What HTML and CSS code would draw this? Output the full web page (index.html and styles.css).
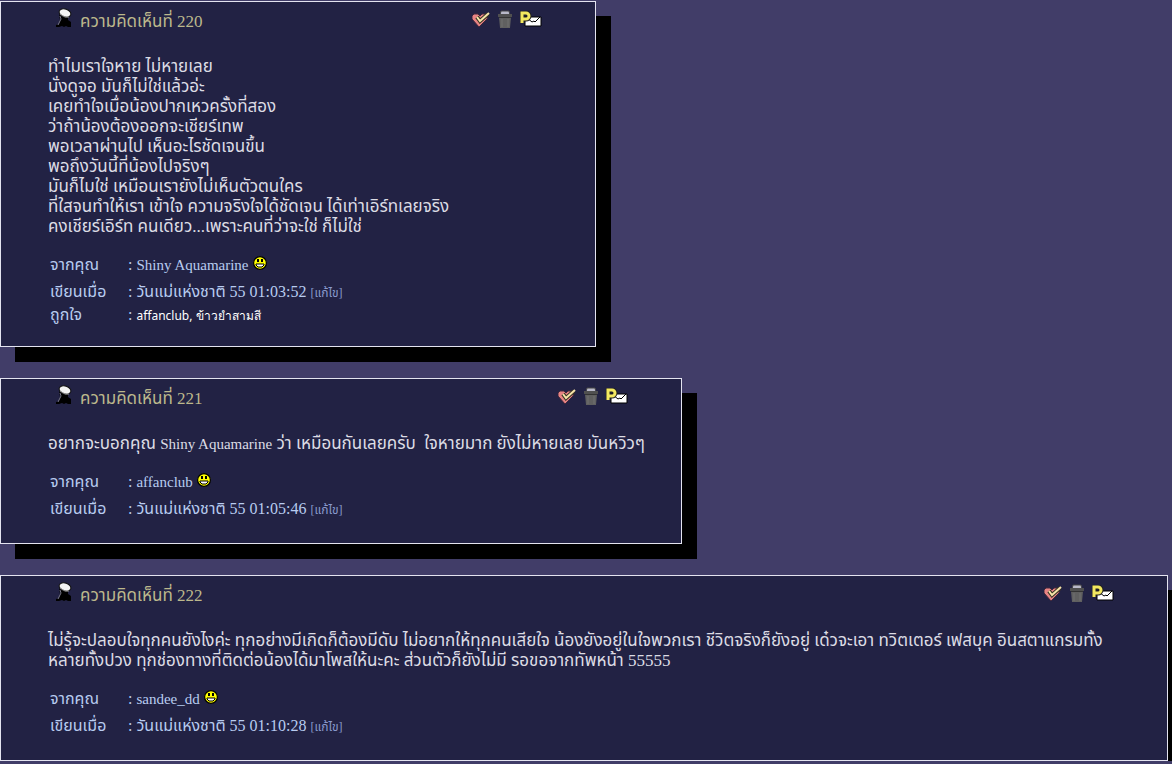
FILE: index.html
```html
<!DOCTYPE html>
<html lang="th">
<head>
<meta charset="utf-8">
<title>ความคิดเห็น</title>
<link rel="stylesheet" href="styles.css">
</head>
<body>
<svg class="sprite" aria-hidden="true">
  <symbol id="pin" viewBox="0 0 18 20">
    <path d="M4 6l4 3h5v3l3 2v5h-3l-2-1-2 1-2-1-3 1H1v-2l3-1 1-4z" fill="#000"/>
    <path d="M5 8l1 3-3 6" fill="none" stroke="#778" stroke-width="1"/>
    <ellipse cx="10" cy="5" rx="6" ry="4" transform="rotate(18 10 5)" fill="#f4f4f4" stroke="#111" stroke-width="1"/>
    <path d="M5 6l5 3h4" fill="none" stroke="#999" stroke-width="1"/>
  </symbol>
  <symbol id="heart" viewBox="0 0 18 18">
    <path d="M7 17L0 9V6l2-2h4l2 2 2-2h4l2 2-1 3z" fill="#e88484" stroke="#43283c" stroke-width="1"/>
    <path d="M5 7l3 4 8-7" fill="none" stroke="#332" stroke-width="4"/>
    <path d="M5 7l3 4 9-8" fill="none" stroke="#f8e4a8" stroke-width="2"/>
  </symbol>
  <symbol id="bin" viewBox="0 0 14 18">
    <path d="M3 1h8l1 4H2z" fill="#b9b9c9" stroke="#444" stroke-width="1"/>
    <path d="M0 4h14v3H0z" fill="#505050"/>
    <path d="M1 7h12l-1 11H2z" fill="#606060"/>
    <path d="M1 7h12v1H1z" fill="#333"/>
    <path d="M4 9v8M10 9v8" stroke="#707070"/>
  </symbol>
  <symbol id="mail" viewBox="0 0 22 16">
    <path d="M5 6h16v9H5z" fill="#fff" stroke="#000"/>
    <path d="M7 7l5 4 2-1 1 1 5-5" fill="none" stroke="#000"/>
    <path d="M2 12V2h4a2 2 0 0 1 0 6H3" fill="none" stroke="#222" stroke-width="5"/>
    <path d="M2 12V2h4a2 2 0 0 1 0 6H3" fill="none" stroke="#f3e860" stroke-width="3"/>
  </symbol>
  <symbol id="smile" viewBox="0 0 14 14">
    <circle cx="7" cy="7" r="6.4" fill="#ff0" stroke="#000" stroke-width="1.2"/>
    <path d="M4 3h2v3H4zM8 3h2v3H8z" fill="#000"/>
    <path d="M3 8h8v1l-2 2H5L3 9z" fill="#fff" stroke="#000" stroke-width="1"/>
  </symbol>
</svg>
<main class="thread">
  <article class="comment comment-wide">
    <header class="head">
      <svg class="pin"><use href="#pin"/></svg>
      <h2 class="title">ความคิดเห็นที่ 220</h2>
      <div class="actions">
        <button class="act" aria-label="ถูกใจ"><svg class="heart"><use href="#heart"/></svg></button>
        <button class="act" aria-label="ลบ"><svg class="bin"><use href="#bin"/></svg></button>
        <button class="act" aria-label="ส่งต่อ"><svg class="mail"><use href="#mail"/></svg></button>
      </div>
    </header>
    <p class="text">ทำไมเราใจหาย ไม่หายเลย<br>นั่งดูจอ มันก็ไม่ใช่แล้วอ่ะ<br>เคยทำใจเมื่อน้องปากเหวครั้งที่สอง<br>ว่าถ้าน้องต้องออกจะเชียร์เทพ<br>พอเวลาผ่านไป เห็นอะไรชัดเจนขึ้น<br>พอถึงวันนี้ที่น้องไปจริงๆ<br>มันก็ไมใช่ เหมือนเรายังไม่เห็นตัวตนใคร<br>ที่ใสจนทำให้เรา เข้าใจ ความจริงใจได้ชัดเจน ได้เท่าเอิร์ทเลยจริง<br>คงเชียร์เอิร์ท คนเดียว...เพราะคนที่ว่าจะใช่ ก็ไม่ใช่</p>
    <table class="meta">
      <tr><th scope="row">จากคุณ</th><td>: <span class="name">Shiny Aquamarine</span> <svg class="smile"><use href="#smile"/></svg></td></tr>
      <tr><th scope="row">เขียนเมื่อ</th><td>: วันแม่แห่งชาติ 55 01:03:52 <a class="edit" href="#">[แก้ไข]</a></td></tr>
      <tr class="likes"><th scope="row">ถูกใจ</th><td>: <span class="fans">affanclub, ข้าวยำสามสี</span></td></tr>
    </table>
  </article>
  <article class="comment">
    <header class="head">
      <svg class="pin"><use href="#pin"/></svg>
      <h2 class="title">ความคิดเห็นที่ 221</h2>
      <div class="actions">
        <button class="act" aria-label="ถูกใจ"><svg class="heart"><use href="#heart"/></svg></button>
        <button class="act" aria-label="ลบ"><svg class="bin"><use href="#bin"/></svg></button>
        <button class="act" aria-label="ส่งต่อ"><svg class="mail"><use href="#mail"/></svg></button>
      </div>
    </header>
    <p class="text">อยากจะบอกคุณ <span class="name">Shiny Aquamarine</span> ว่า เหมือนกันเลยครับ&nbsp; ใจหายมาก ยังไม่หายเลย มันหวิวๆ</p>
    <table class="meta">
      <tr><th scope="row">จากคุณ</th><td>: <span class="name">affanclub</span> <svg class="smile"><use href="#smile"/></svg></td></tr>
      <tr><th scope="row">เขียนเมื่อ</th><td>: วันแม่แห่งชาติ 55 01:05:46 <a class="edit" href="#">[แก้ไข]</a></td></tr>
    </table>
  </article>
  <article class="comment">
    <header class="head">
      <svg class="pin"><use href="#pin"/></svg>
      <h2 class="title">ความคิดเห็นที่ 222</h2>
      <div class="actions">
        <button class="act" aria-label="ถูกใจ"><svg class="heart"><use href="#heart"/></svg></button>
        <button class="act" aria-label="ลบ"><svg class="bin"><use href="#bin"/></svg></button>
        <button class="act" aria-label="ส่งต่อ"><svg class="mail"><use href="#mail"/></svg></button>
      </div>
    </header>
    <p class="text">ไม่รู้จะปลอบใจทุกคนยังไงค่ะ ทุกอย่างมีเกิดก็ต้องมีดับ ไม่อยากให้ทุกคนเสียใจ น้องยังอยู่ในใจพวกเรา ชีวิตจริงก็ยังอยู่ เด๋วจะเอา ทวิตเตอร์ เฟสบุค อินสตาแกรมทั้งหลายทั้งปวง ทุกช่องทางที่ติดต่อน้องได้มาโพสให้นะคะ ส่วนตัวก็ยังไม่มี รอขอจากทัพหน้า 55555</p>
    <table class="meta">
      <tr><th scope="row">จากคุณ</th><td>: <span class="name">sandee_dd</span> <svg class="smile"><use href="#smile"/></svg></td></tr>
      <tr><th scope="row">เขียนเมื่อ</th><td>: วันแม่แห่งชาติ 55 01:10:28 <a class="edit" href="#">[แก้ไข]</a></td></tr>
    </table>
  </article>
</main>
</body>
</html>
```
FILE: styles.css
```css
* { box-sizing: border-box; }
body {
  margin: 0;
  background: #413d68;
  color: #dcdce4;
  font: 16px/20px "Liberation Serif", "Noto Sans Thai", "Loma", serif;
  overflow-x: hidden;
}
.sprite { display: none; }
.thread {
  display: flex;
  flex-direction: column;
  align-items: flex-start;
  gap: 31px;
  padding: 1px 4px 0 0;
}
.comment {
  max-width: 100%;
  padding: 6px 36px 21px 47px;
  border: 1px solid #e4e4f0;
  background: #222244;
  box-shadow: 15px 15px 0 #000;
}
.comment-wide { min-width: 596px; }
.head {
  display: flex;
  align-items: flex-start;
  height: 49px;
  padding: 0 17px 0 7px;
}
.pin { width: 18px; height: 20px; }
.title {
  margin: 4px 0 0 7px;
  color: #bcb88c;
  font-size: 17px;
  font-weight: normal;
}
.actions { display: flex; gap: 8px; margin-left: auto; padding-top: 2px; }
.act { display: block; height: 18px; padding: 0; border: 0; background: none; cursor: pointer; }
.act svg { display: block; }
.heart { width: 18px; height: 18px; }
.bin { width: 14px; height: 18px; }
.mail { width: 22px; height: 16px; }
.text { margin: 0; font-size: 17px; }
.name { font-size: 15px; }
.meta { margin-top: 14px; border-collapse: collapse; color: #b8ccf0; }
.meta th { width: 80px; padding: 0 0 0 2px; text-align: left; font-weight: normal; }
.meta td { padding: 0; }
.meta tr { height: 27px; }
.meta .likes { height: 20px; }
.smile { width: 14px; height: 14px; }
.edit { color: #8899cc; font-size: 12px; line-height: 16px; text-decoration: none; }
.fans { color: #fff; font: 12px/16px "Noto Sans", sans-serif; }
```
